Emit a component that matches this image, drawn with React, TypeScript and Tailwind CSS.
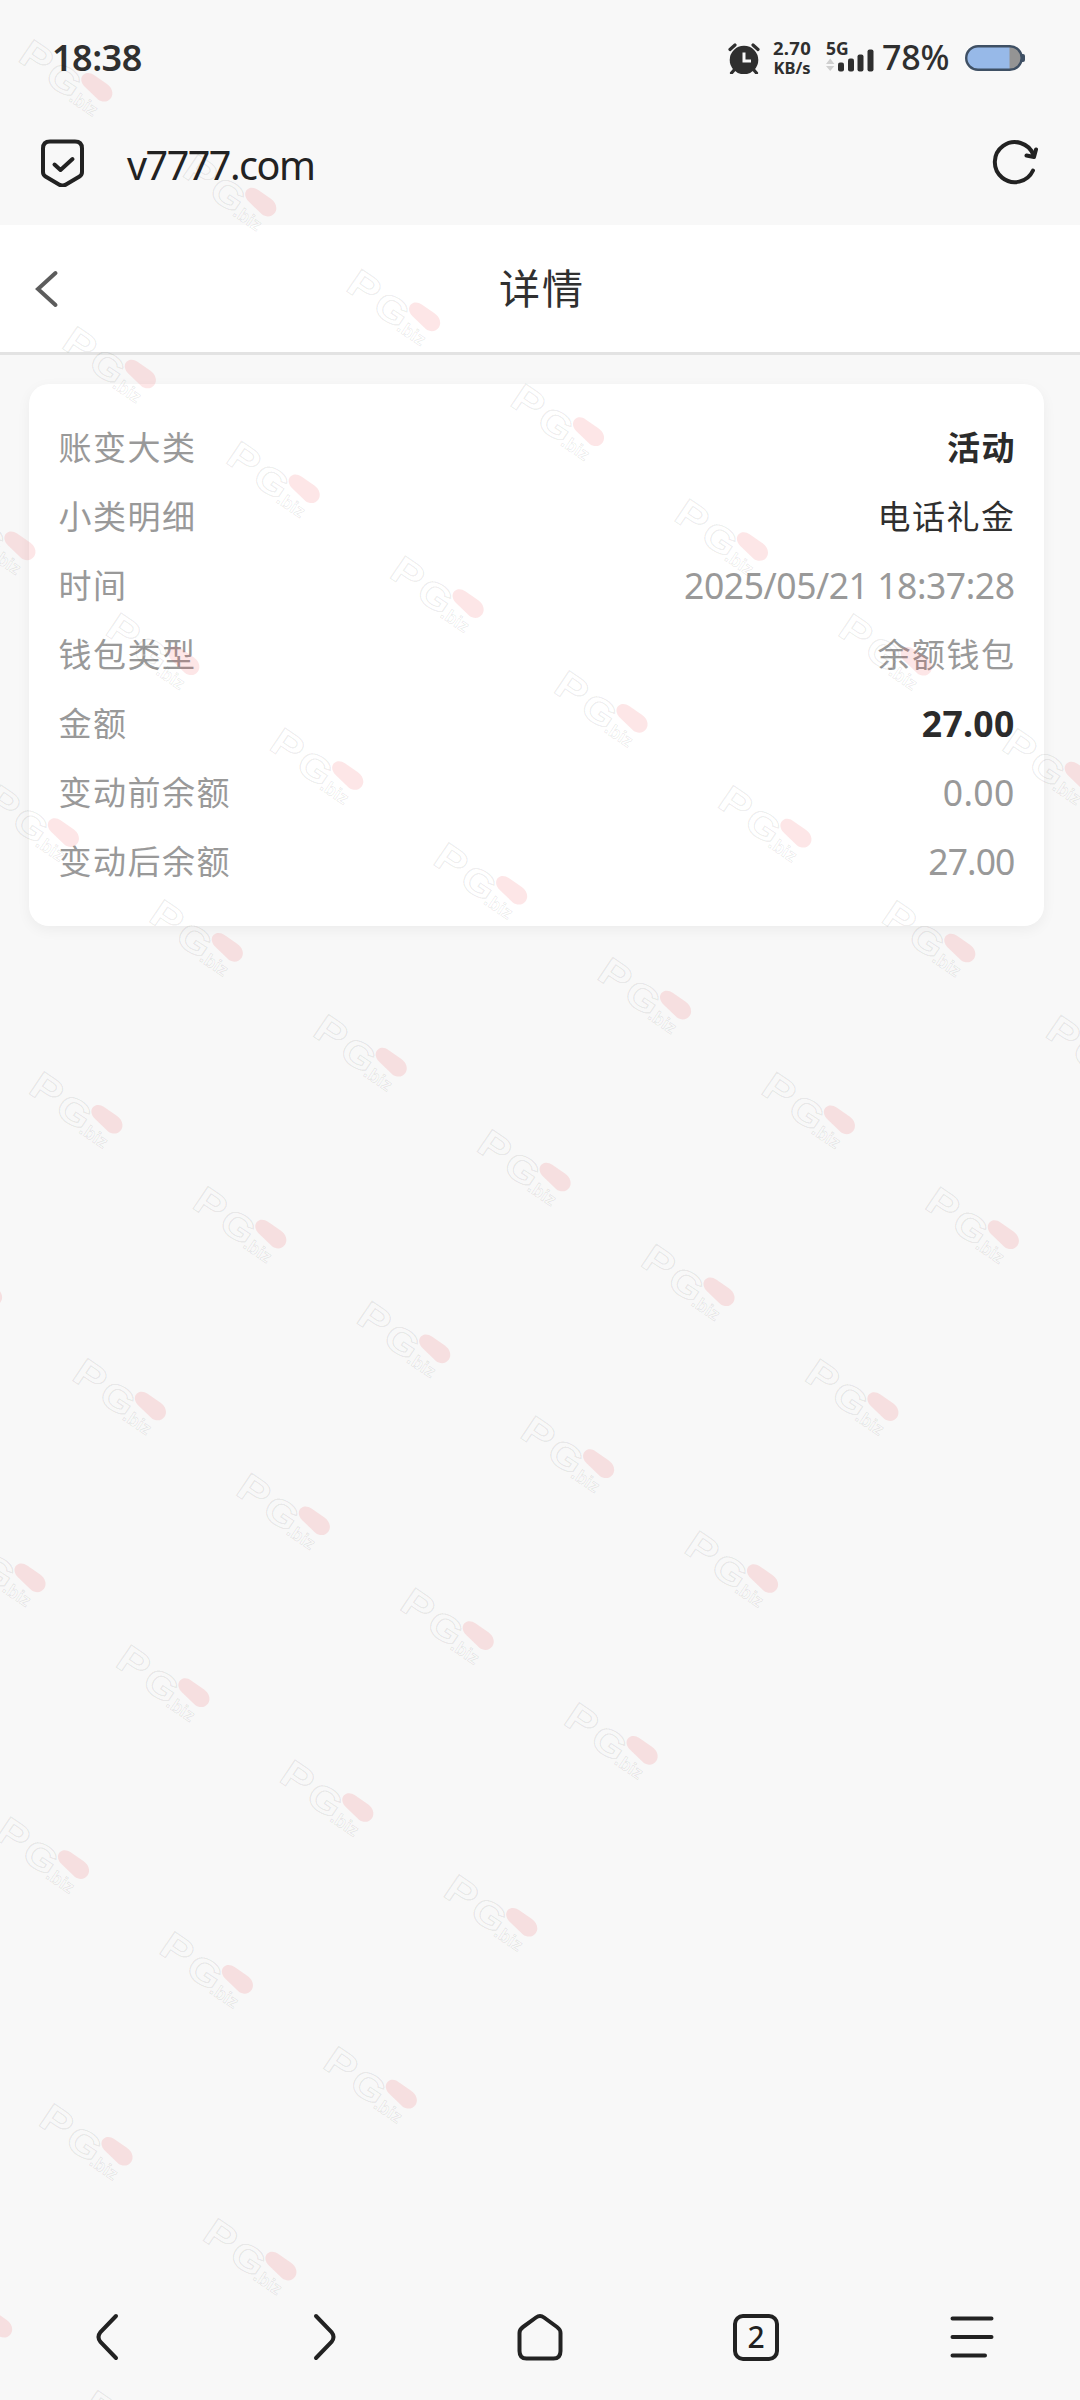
import type React from "react"

type DetailRow = {
  label: string
  value: string
  valueClass: string
}

const rows: DetailRow[] = [
  { label: "账变大类", value: "活动", valueClass: "mr-[-1.5px] font-bold text-[#2b2b2b]" },
  { label: "小类明细", value: "电话礼金", valueClass: "mr-[-1px] text-[#2f2f2f]" },
  { label: "时间", value: "2025/05/21 18:37:28", valueClass: "text-[35.5px] tracking-[-0.45px] text-[#999999]" },
  { label: "钱包类型", value: "余额钱包", valueClass: "mr-[-1px] text-[#999999]" },
  { label: "金额", value: "27.00", valueClass: "text-[35.5px] tracking-[0.3px] font-bold text-[#2b2b2b]" },
  { label: "变动前余额", value: "0.00", valueClass: "text-[35.5px] tracking-[0.3px] text-[#999999]" },
  { label: "变动后余额", value: "27.00", valueClass: "text-[35.5px] tracking-[-0.9px] text-[#999999]" },
]

// Watermark grid: every line runs diagonally, first/last are the logo indexes on that line
const watermarkLines = [
  { first: 0, last: 6 },
  { first: 0, last: 6 },
  { first: -1, last: 5 },
  { first: -1, last: 4 },
  { first: -1, last: 3 },
  { first: -2, last: 2 },
  { first: -2, last: 1 },
  { first: -2, last: 0 },
  { first: -2, last: -1 },
  { first: -3, last: -2 },
]

const watermarks = watermarkLines.flatMap(({ first, last }, line) =>
  Array.from({ length: last - first + 1 }, (_, i) => ({
    x: 17 + line * 43.5 + (first + i) * 163.9,
    y: 37 + line * 286.7 + (first + i) * 114.8,
  })),
)

const Watermark: React.FC = () => (
  <svg className="absolute inset-0 pointer-events-none" width="1080" height="2400" aria-hidden="true">
    {watermarks.map(({ x, y }) => (
      <g key={`${x}-${y}`} transform={`translate(${x} ${y})`}>
        <g
          transform="translate(-1 24) rotate(34)"
          className="font-['Liberation_Sans'] font-bold"
          fill="none"
          stroke="#000"
          strokeOpacity="0.08"
        >
          <g transform="scale(1.18 1)" strokeWidth="1.2">
            <text x="0" y="-1" fontSize="39">P</text>
            <text x="28.5" y="1.5" fontSize="37">G</text>
          </g>
          <text x="65" y="3.5" fontSize="18" strokeWidth="0.9">.biz</text>
        </g>
        <path
          d="M66 38C69 35 73.500 35.500 77 38L90 47C95 50.500 97 56.500 94 61C91 65.500 85 65.500 81 62.500L68 50C64 46 63 41.500 66 38Z"
          fill="#f0303c"
          fillOpacity="0.12"
        />
      </g>
    ))}
  </svg>
)

const StatusBar: React.FC = () => (
  <div className="flex items-center h-[115px] pl-[52px] pr-[55px] text-[#2f2f2f]">
    <span className="text-[36px] font-semibold tracking-[-0.5px]">18:38</span>
    <svg className="ml-auto" width="32" height="32" viewBox="0 0 32 32">
      <circle cx="16" cy="18" r="14.3" fill="#2f2f2f" />
      <path
        d="M2 7.500L7 3M30 7.500L25 3M7 27L3.500 31M25 27L28.500 31"
        stroke="#2f2f2f"
        strokeWidth="3.2"
        strokeLinecap="round"
      />
      <path d="M16 10.500V19H23" stroke="#f8f8f8" strokeWidth="3" fill="none" />
    </svg>
    <div className="flex flex-col items-center w-[40px] ml-[12px] font-bold">
      <span className="text-[18.5px] leading-[20px] tracking-[0.3px]">2.70</span>
      <span className="text-[16.5px] leading-[19px]">KB/s</span>
    </div>
    <div className="flex flex-col ml-[14px] mt-[-4px]">
      <span className="text-[17.5px] leading-[18px] h-[10px] font-bold">5G</span>
      <svg width="48" height="23" viewBox="0 0 48 23">
        <path d="M0 15L4.200 9.500L8.400 15ZM0 17L8.400 17L4.200 22Z" fill="#cfcfcf" />
        <rect x="12" y="13.5" width="6" height="9" rx="2" fill="#2f2f2f" />
        <rect x="22" y="9.5" width="6" height="13" rx="2" fill="#2f2f2f" />
        <rect x="31.5" y="5.5" width="6" height="17" rx="2" fill="#2f2f2f" />
        <rect x="41.5" y="0.5" width="6" height="22" rx="2" fill="#2f2f2f" />
      </svg>
    </div>
    <span className="ml-[8px] w-[69px] text-[34px] font-medium tracking-[-0.2px]">78%</span>
    <svg className="ml-[14px]" width="60" height="26" viewBox="0 0 60 26">
      <path d="M54 9h4a2 2 0 0 1 2 2v4a2 2 0 0 1-2 2h-4z" fill="#3f5064" />
      <rect x="1.2" y="1.2" width="55.5" height="23.6" rx="11.8" fill="#97b9e8" />
      <path d="M44.500 1.500C52 2 56.500 7 56.500 13S52 24 44.500 24.500Z" fill="#949494" />
      <rect x="1.2" y="1.2" width="55.5" height="23.6" rx="11.8" fill="none" stroke="#3f5064" strokeWidth="2.4" />
    </svg>
  </div>
)

const AddressBar: React.FC = () => (
  <div className="flex items-center h-[110px] pb-[14px] pl-[40px] pr-[42px] text-[#222222]">
    <svg
      width="46"
      height="48"
      viewBox="0 0 46 48"
      fill="none"
      stroke="#222222"
      strokeWidth="4"
      strokeLinejoin="round"
      strokeLinecap="round"
    >
      <path d="M10 2.500H35Q42 2.500 42 9.500V33Q42 36 39.500 37.500L26 45.500Q22.500 47.500 19 45.500L5.500 37.500Q3 36 3 33V9.500Q3 2.500 10 2.500Z" />
      <path d="M14.500 25.500L20.500 31L32.500 20" />
    </svg>
    <span className="ml-[41px] mt-[4px] text-[39.5px] leading-[50px] tracking-[-1.5px]">v7777.com</span>
    <svg
      className="ml-auto"
      width="46"
      height="46"
      viewBox="0 0 46 46"
      fill="none"
      stroke="#222222"
      strokeWidth="4"
      strokeLinecap="round"
      strokeLinejoin="round"
    >
      <path d="M41 30.500A20 20 0 1 1 41.500 15" />
      <path d="M34.500 15.500L42 17L44 9.500" />
    </svg>
  </div>
)

const PageHeader: React.FC = () => (
  <header className="grid grid-cols-3 items-center h-[130px] bg-white border-b-[3px] border-[#e3e3e3]">
    <svg className="ml-[34px]" width="26" height="38" viewBox="0 0 26 38">
      <path d="M21.500 3L4 19L21.500 35" fill="none" stroke="#5c5c5c" strokeWidth="4" strokeLinecap="round" />
    </svg>
    <h1 className="pl-[4px] text-center text-[41px] tracking-[2px] text-[#303030]">详情</h1>
  </header>
)

const DetailCard: React.FC = () => (
  <dl className="ml-[29px] mr-[36px] mt-[29px] h-[542px] px-[29.5px] pt-[29px] bg-white rounded-[20px] shadow-[0_4px_14px_rgba(0,0,0,0.05)]">
    {rows.map((row) => (
      <div key={row.label} className="flex justify-between items-center h-[69px] text-[33px] tracking-[1.5px]">
        <dt className="text-[#999999]">{row.label}</dt>
        <dd className={row.valueClass}>{row.value}</dd>
      </div>
    ))}
  </dl>
)

const BottomNav: React.FC = () => (
  <nav className="grid grid-cols-5 justify-items-center items-center h-[126px] mt-auto text-[#222222]">
    <svg width="48" height="48" viewBox="0 0 48 48" fill="none" stroke="#222222" strokeWidth="4" strokeLinecap="round">
      <path d="M32 3L16.500 19Q12.500 24 16.500 29L32 45" />
    </svg>
    <svg width="48" height="48" viewBox="0 0 48 48" fill="none" stroke="#222222" strokeWidth="4" strokeLinecap="round">
      <path d="M16 3L31.500 19Q35.500 24 31.500 29L16 45" />
    </svg>
    <svg width="48" height="48" viewBox="0 0 48 48" fill="none" stroke="#222222" strokeWidth="4" strokeLinejoin="round">
      <path d="M20 4.500Q24 1.500 28 4.500L41 14Q44.500 16.500 44.500 20V38Q44.500 45.500 37.500 45.500H10.500Q3.500 45.500 3.500 38V20Q3.500 16.500 7 14Z" />
    </svg>
    <div className="flex items-center justify-center w-[46px] h-[47px] border-4 border-[#222222] rounded-[10px] text-[30px] leading-none font-medium">
      2
    </div>
    <svg width="48" height="48" viewBox="0 0 48 48" fill="none" stroke="#222222" strokeWidth="4" strokeLinecap="round">
      <path d="M4.500 5.500H43.500M4.500 24H43.500M4.500 42.500H37" />
    </svg>
  </nav>
)

const App: React.FC = () => {
  return (
    <div className="relative flex flex-col w-[1080px] h-[2400px] overflow-hidden bg-[#f8f8f8] font-['Noto_Sans','Noto_Sans_CJK_SC',sans-serif]">
      <StatusBar />
      <AddressBar />
      <PageHeader />
      <DetailCard />
      <BottomNav />
      <Watermark />
    </div>
  )
}

export default App
